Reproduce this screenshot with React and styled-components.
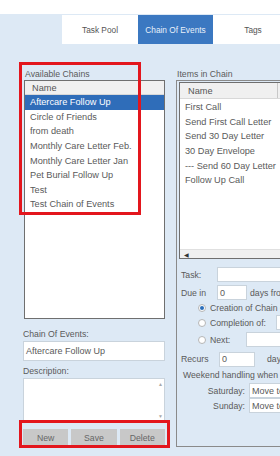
import React from "react";
import styled, { createGlobalStyle } from "styled-components";

const GlobalStyle = createGlobalStyle`
  html, body { margin: 0; padding: 0; }
  body {
    background: #dde9f5;
    font-family: "Liberation Sans", Arial, sans-serif;
    color: #5a5a5a;
    width: 280px;
    height: 456px;
    overflow: hidden;
  }
`;

const Page = styled.div`
  position: relative;
  width: 280px;
  height: 456px;
  overflow: hidden;
`;

const TopBar = styled.div`
  height: 14px;
  background: #fff;
`;

const TabRow = styled.div`
  display: flex;
  margin: 1px 0 0 62px;
  height: 29px;
`;

const Tab = styled.div`
  width: ${(p) => p.$w}px;
  flex: none;
  display: flex;
  align-items: center;
  justify-content: center;
  font-size: 8.3px;
  background: ${(p) => (p.$active ? "#3b78c1" : "#fff")};
  color: ${(p) => (p.$active ? "#e8f0fa" : "#555")};
`;

const Content = styled.div`
  display: flex;
  margin-top: 24px;
  padding-left: 23px;
`;

const LeftCol = styled.div`
  width: 142px;
  flex: none;
  display: flex;
  flex-direction: column;
`;

const RightCol = styled.div`
  width: 220px;
  flex: none;
  margin-left: 11px;
  display: flex;
  flex-direction: column;
`;

const Label = styled.div`
  font-size: 8.7px;
  line-height: 12px;
  height: 12px;
  padding-left: ${(p) => p.$pl || 0}px;
  margin-top: ${(p) => p.$mt || 0}px;
  white-space: nowrap;
`;

const ListBox = styled.div`
  margin-left: 1px;
  height: ${(p) => p.$h}px;
  box-sizing: border-box;
  border: 1px solid #6f6f6f;
  background: #fff;
  display: flex;
  flex-direction: column;
  overflow: hidden;
`;

const ListHeader = styled.div`
  height: ${(p) => p.$h}px;
  flex: none;
  background: #f0f0f0;
  border-bottom: 1px solid #d8d8d8;
  display: flex;
  align-items: center;
  font-size: 9.2px;
  color: #555;
  padding-left: ${(p) => p.$pl}px;
  box-sizing: border-box;
`;

const Row = styled.div`
  height: 14.6px;
  flex: none;
  display: flex;
  align-items: center;
  font-size: 9.2px;
  white-space: nowrap;
  padding-left: ${(p) => p.$pl}px;
  background: ${(p) => (p.$sel ? "#2f6db9" : "transparent")};
  color: ${(p) => (p.$sel ? "#fff" : "#5a5a5a")};
`;

const TextInput = styled.div`
  height: 15px;
  box-sizing: border-box;
  border: 1px solid #c9d3dc;
  background: #fff;
  font-size: 9px;
  display: flex;
  align-items: center;
  padding-left: 2px;
  white-space: nowrap;
  overflow: hidden;
  width: ${(p) => (p.$w ? `${p.$w}px` : "auto")};
  flex: ${(p) => (p.$w ? "none" : "1")};
  margin-top: ${(p) => p.$mt || 0}px;
  margin-left: ${(p) => p.$ml || 0}px;
`;

const TextArea = styled.div`
  height: 45px;
  box-sizing: border-box;
  border: 1px solid #c9d3dc;
  background: #fff;
  display: flex;
  justify-content: flex-end;
  margin-top: 1px;
`;

const VScroll = styled.div`
  width: 7px;
  display: flex;
  flex-direction: column;
  justify-content: space-between;
  align-items: center;
  padding: 3px 0;
  color: #a8a8a8;
  font-size: 5px;
  line-height: 5px;
`;

const ButtonRow = styled.div`
  display: flex;
  gap: 3px;
  margin-top: 6px;
`;

const Button = styled.div`
  width: 46px;
  height: 18px;
  background: #c8c8c8;
  color: #666;
  font-size: 8.7px;
  display: flex;
  align-items: center;
  justify-content: center;
`;

const Panel = styled.div`
  height: 367px;
  box-sizing: border-box;
  border: 1px solid #8a8a8a;
  border-right: none;
  padding: 1px 0 0 2px;
  display: flex;
  flex-direction: column;
`;

const ItemsList = styled.div`
  height: 177px;
  box-sizing: border-box;
  border: 1px solid #6f6f6f;
  border-right: none;
  background: #fff;
  display: flex;
  flex-direction: column;
`;

const HeaderInner = styled.div`
  width: 98px;
  height: 100%;
  border-right: 1px solid #c8c8c8;
  display: flex;
  align-items: center;
  padding-left: 8px;
  box-sizing: border-box;
`;

const RowsArea = styled.div`
  flex: 1;
  padding-top: 1px;
`;

const HScroll = styled.div`
  height: 8px;
  flex: none;
  background: #f0f0f0;
  border-top: 1px solid #e0e0e0;
  display: flex;
  align-items: center;
  padding-left: 4px;
  font-size: 6px;
  color: #333;
`;

const FormRow = styled.div`
  display: flex;
  align-items: center;
  height: ${(p) => p.$h || 15}px;
  margin-top: ${(p) => p.$mt || 0}px;
  padding-left: ${(p) => p.$pl || 0}px;
  font-size: 8.7px;
  white-space: nowrap;
`;

const FieldLabel = styled.span`
  width: ${(p) => p.$w}px;
  flex: none;
  text-align: ${(p) => p.$align || "left"};
`;

const Radio = styled.span`
  width: 8px;
  height: 8px;
  box-sizing: border-box;
  border-radius: 50%;
  border: 1px solid #b5b5b5;
  background: #fff;
  flex: none;
  margin-right: 4px;
  display: flex;
  align-items: center;
  justify-content: center;
  &::after {
    content: "";
    width: 4px;
    height: 4px;
    border-radius: 50%;
    background: ${(p) => (p.$on ? "#2a6ebb" : "transparent")};
  }
`;

const After = styled.span`
  margin-left: ${(p) => p.$ml}px;
`;

const RedBox = styled.div`
  position: absolute;
  left: ${(p) => p.$x}px;
  top: ${(p) => p.$y}px;
  width: ${(p) => p.$w}px;
  height: ${(p) => p.$h}px;
  box-sizing: border-box;
  border: 3px solid #e3161d;
  pointer-events: none;
`;

const chains = [
  "Aftercare Follow Up",
  "Circle of Friends",
  "from death",
  "Monthly Care Letter Feb.",
  "Monthly Care Letter Jan",
  "Pet Burial Follow Up",
  "Test",
  "Test Chain of Events",
];

const items = [
  "First Call",
  "Send First Call Letter",
  "Send 30 Day Letter",
  "30 Day Envelope",
  "--- Send 60 Day Letter",
  "Follow Up Call",
];

export default function App() {
  return (
    <Page>
      <GlobalStyle />
      <TopBar />
      <TabRow>
        <Tab $w={76}>Task Pool</Tab>
        <Tab $w={75} $active>
          Chain Of Events
        </Tab>
        <Tab $w={80}>Tags</Tab>
      </TabRow>
      <Content>
        <LeftCol>
          <Label $pl={2}>Available Chains</Label>
          <ListBox $h={239}>
            <ListHeader $h={14} $pl={7}>
              Name
            </ListHeader>
            {chains.map((c, i) => (
              <Row key={c} $pl={5} $sel={i === 0}>
                {c}
              </Row>
            ))}
          </ListBox>
          <Label $mt={9}>Chain Of Events:</Label>
          <TextInput $mt={1}>Aftercare Follow Up</TextInput>
          <Label $mt={4}>Description:</Label>
          <TextArea>
            <VScroll>
              <span>▲</span>
              <span>▼</span>
            </VScroll>
          </TextArea>
          <ButtonRow>
            <Button>New</Button>
            <Button>Save</Button>
            <Button>Delete</Button>
          </ButtonRow>
        </LeftCol>
        <RightCol>
          <Label $pl={1}>Items in Chain</Label>
          <Panel>
            <ItemsList>
              <ListHeader $h={16} $pl={0}>
                <HeaderInner>Name</HeaderInner>
              </ListHeader>
              <RowsArea>
                {items.map((c) => (
                  <Row key={c} $pl={5}>
                    {c}
                  </Row>
                ))}
              </RowsArea>
              <HScroll>◀</HScroll>
            </ItemsList>
            <FormRow $mt={8} $pl={2}>
              <FieldLabel $w={36}>Task:</FieldLabel>
              <TextInput />
            </FormRow>
            <FormRow $mt={3} $pl={2}>
              <FieldLabel $w={36}>Due in</FieldLabel>
              <TextInput $w={30}>0</TextInput>
              <After $ml={3}>days from</After>
            </FormRow>
            <FormRow $mt={0} $pl={19}>
              <Radio $on />
              Creation of Chain of Events
            </FormRow>
            <FormRow $mt={0} $pl={19}>
              <Radio />
              <FieldLabel $w={66}>Completion of:</FieldLabel>
              <TextInput />
            </FormRow>
            <FormRow $mt={2} $pl={19}>
              <Radio />
              <FieldLabel $w={36}>Next:</FieldLabel>
              <TextInput />
            </FormRow>
            <FormRow $mt={4} $h={16} $pl={2}>
              <FieldLabel $w={38}>Recurs</FieldLabel>
              <TextInput $w={36}>0</TextInput>
              <After $ml={12}>days</After>
            </FormRow>
            <FormRow $mt={1} $h={13} $pl={4}>
              Weekend handling when due date falls on
            </FormRow>
            <FormRow $mt={2} $pl={0}>
              <FieldLabel $w={66} $align="right">
                Saturday:
              </FieldLabel>
              <TextInput $ml={4}>Move to Friday</TextInput>
            </FormRow>
            <FormRow $mt={0} $pl={0}>
              <FieldLabel $w={66} $align="right">
                Sunday:
              </FieldLabel>
              <TextInput $ml={4}>Move to Monday</TextInput>
            </FormRow>
          </Panel>
        </RightCol>
      </Content>
      <RedBox $x={19} $y={62} $w={122} $h={153} />
      <RedBox $x={19} $y={420} $w={151} $h={28} />
    </Page>
  );
}
